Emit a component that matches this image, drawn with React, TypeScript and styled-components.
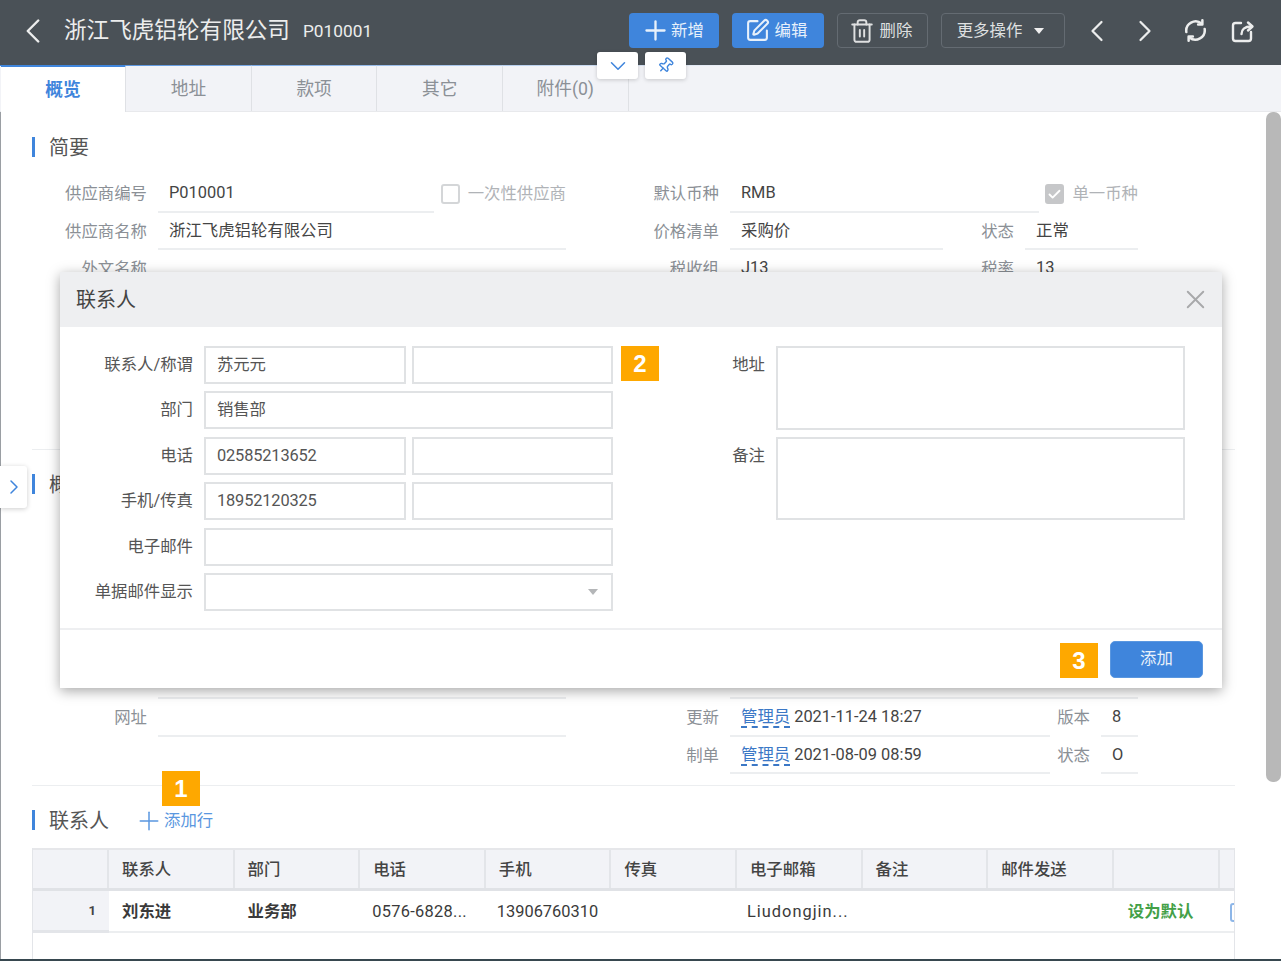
import React from 'react';
import styled, { createGlobalStyle } from 'styled-components';
import { ChevronLeft, ChevronRight, ChevronDown, Plus, SquarePen, Trash2, Pin, X, Check } from 'lucide-react';

const blue = '#3f85dc';
const labelGray = '#8b9096';
const lineGray = '#eceef0';
const fieldBorder = '#e0e2e4';
const fonts = 'Roboto, "Noto Sans CJK SC", sans-serif';

const GlobalStyle = createGlobalStyle`
  html, body {
    margin: 0;
    padding: 0;
    background: #fff;
  }
  body {
    font-family: ${fonts};
    font-size: 16.4px;
    line-height: 20px;
    color: #444;
  }
  * {
    box-sizing: border-box;
  }
  svg {
    flex-shrink: 0;
  }
`;

const Page = styled.div`
  position: relative;
  width: 1281px;
  height: 961px;
  overflow: hidden;
  display: flex;
  flex-direction: column;
  border-bottom: 2px solid #37474f;
`;

const Header = styled.header`
  height: 65px;
  flex-shrink: 0;
  display: flex;
  align-items: center;
  padding: 0 16px 4px 20px;
  background: #4a5157;
  color: #eceded;
`;
const BackButton = styled.div`
  display: flex;
  justify-content: center;
  width: 26px;
  margin-right: 18px;
`;
const Title = styled.h1`
  margin: 0 13px 0 0;
  font-size: 22.6px;
  line-height: 28px;
  font-weight: 400;
`;
const Code = styled.span`
  font-size: 17.3px;
`;
const Actions = styled.div`
  margin-left: auto;
  display: flex;
  align-items: center;
  gap: 13px;
`;
const ActionButton = styled.button<{ $primary?: boolean; $w: number; $gap?: number; $shift?: number }>`
  width: ${p => p.$w}px;
  height: 35px;
  padding: 0 ${p => p.$shift ?? 0}px 0 0;
  display: flex;
  align-items: center;
  justify-content: center;
  gap: ${p => p.$gap ?? 5}px;
  font: 400 16.4px/20px ${fonts};
  color: ${p => (p.$primary ? '#e8f1fb' : '#dfe0e1')};
  background: ${p => (p.$primary ? blue : 'transparent')};
  border: ${p => (p.$primary ? 'none' : '1px solid #646b72')};
  border-radius: 4px;
`;
const Caret = styled.i<{ $color?: string }>`
  width: 0;
  height: 0;
  margin-left: 4px;
  border-left: 5.5px solid transparent;
  border-right: 5.5px solid transparent;
  border-top: 6px solid ${p => p.$color || '#f0f0f0'};
`;
const MoreCaret = styled(Caret)`
  margin-left: 7px;
  margin-right: 5px;
`;
const IconButtons = styled.div`
  display: flex;
  margin-left: 8px;
`;
const IconButton = styled.div<{ $w: number }>`
  width: ${p => p.$w}px;
  display: flex;
  align-items: center;
  justify-content: center;
  color: #eceded;
`;

const FloatBar = styled.div`
  position: absolute;
  left: 597px;
  top: 52px;
  display: flex;
  gap: 7px;
  z-index: 3;
`;
const FloatButton = styled.div`
  width: 41px;
  height: 27px;
  display: flex;
  align-items: center;
  justify-content: center;
  background: #fff;
  color: ${blue};
  border-radius: 3px;
  box-shadow: 0 1px 4px rgba(0, 0, 0, 0.18);
`;
const PinIcon = styled(Pin)`
  transform: rotate(42deg);
`;

const Tabs = styled.nav`
  position: relative;
  height: 47px;
  flex-shrink: 0;
  display: flex;
  padding-left: 0.6px;
  background: #f2f3f7;
  border-bottom: 1px solid #e8e9ec;
  &::before {
    content: '';
    position: absolute;
    top: 0;
    left: 0;
    width: 760px;
    height: 1px;
    background: linear-gradient(90deg, ${blue}, rgba(63, 133, 220, 0));
  }
`;
const Tab = styled.div<{ $active?: boolean }>`
  position: relative;
  width: 125.6px;
  display: flex;
  align-items: center;
  justify-content: center;
  font-size: 17.7px;
  font-weight: ${p => (p.$active ? 700 : 400)};
  color: ${p => (p.$active ? blue : labelGray)};
  background: ${p => (p.$active ? '#fff' : 'transparent')};
  border-right: 1px solid #dfe1e5;
  border-top: 2px solid ${p => (p.$active ? blue : 'transparent')};
  margin-bottom: ${p => (p.$active ? '-1px' : '0')};
`;

const Main = styled.main`
  flex: 1;
  min-height: 0;
  display: flex;
  border-left: 1px solid #9a9ea3;
`;
const Content = styled.div`
  flex: 1;
  min-width: 0;
  padding: 1px 31px 0 31px;
  overflow: hidden;
`;
const Scrollbar = styled.div`
  width: 15px;
  flex-shrink: 0;
  background: #fff;
`;
const Thumb = styled.div`
  height: 670px;
  background: #b8b8b8;
  border-radius: 7px;
`;

const SideHandle = styled.div`
  position: absolute;
  left: 0;
  top: 466px;
  width: 27px;
  height: 42px;
  display: flex;
  align-items: center;
  justify-content: center;
  background: #fff;
  color: ${blue};
  border-radius: 0 3px 3px 0;
  box-shadow: 0 1px 5px rgba(0, 0, 0, 0.2);
  z-index: 1;
`;

const Section = styled.section<{ $last?: boolean }>`
  padding: 24px 0 ${p => (p.$last ? 0 : 11)}px;
  border-bottom: ${p => (p.$last ? 'none' : `1px solid ${lineGray}`)};
`;
const SectionHead = styled.div`
  height: 20px;
  margin-bottom: 18px;
  display: flex;
  align-items: center;
`;
const SectionTitle = styled.h2`
  margin: 0;
  height: 20px;
  padding-left: 14px;
  font-size: 20px;
  font-weight: 400;
  line-height: 22px;
  color: #555;
  border-left: 3px solid ${blue};
`;
const AddRow = styled.div`
  position: relative;
  margin-left: 25px;
  padding-top: 2px;
  display: flex;
  align-items: center;
  gap: 0;
  color: #5a97e0;
`;

const Badge = styled.div`
  width: 38px;
  height: 35px;
  display: flex;
  align-items: center;
  justify-content: center;
  flex-shrink: 0;
  background: #fea800;
  color: #fff;
  font: 700 24px/35px 'Liberation Sans', sans-serif;
`;
const AddBadge = styled(Badge)`
  position: absolute;
  left: 28px;
  top: -33px;
`;
const FormBadge = styled(Badge)`
  position: absolute;
  left: 561px;
  top: 0;
`;
const FooterBadge = styled(Badge)`
  margin-top: 3px;
`;

const Row = styled.div`
  height: 37.5px;
  display: grid;
  grid-template-columns: 534px 538px;
  column-gap: 34px;
`;
const Block = styled.div`
  display: flex;
  min-width: 0;
`;
const Label = styled.div<{ $w: number }>`
  width: ${p => p.$w}px;
  flex-shrink: 0;
  margin-right: 11px;
  padding-top: 9px;
  text-align: right;
  color: ${labelGray};
  white-space: nowrap;
`;
const Value = styled.div<{ $w?: number }>`
  ${p => (p.$w ? `width: ${p.$w}px; flex-shrink: 0;` : 'flex: 1;')}
  min-width: 0;
  padding: 8px 0 0 11px;
  color: #444;
  white-space: nowrap;
  border-bottom: 2px solid ${lineGray};
`;
const HiddenRows = styled.div<{ $rows: number }>`
  height: ${p => p.$rows * 37.5}px;
`;
const CheckField = styled.div<{ $w: number }>`
  width: ${p => p.$w}px;
  flex-shrink: 0;
  margin-left: auto;
  display: flex;
  align-items: flex-start;
  gap: 8px;
  padding-top: 9px;
  color: #b0b3b7;
  white-space: nowrap;
`;
const CheckBox = styled.span<{ $checked?: boolean }>`
  width: 20px;
  height: 20px;
  display: flex;
  align-items: center;
  justify-content: center;
  color: #fff;
  background: ${p => (p.$checked ? '#c6c7c9' : '#fff')};
  border: 2px solid ${p => (p.$checked ? '#c6c7c9' : '#d4d6d8')};
  border-radius: 3px;
`;
const UserLink = styled.span`
  color: #3b78c6;
  border-bottom: 2px dashed #3b78c6;
  margin-right: 4px;
`;

const Table = styled.div`
  height: 112px;
  border-left: 1px solid #e3e5e9;
  border-right: 1px solid #e3e5e9;
  overflow: hidden;
`;
const TableRow = styled.div<{ $head?: boolean }>`
  display: grid;
  grid-template-columns: 76px repeat(8, 125.6px) 106px 1fr;
  height: ${p => (p.$head ? 43 : 42)}px;
  ${p =>
    p.$head
      ? `background: #f2f3f7; border-top: 2px solid #e6e7ea; border-bottom: 3px solid #e0e2e6;`
      : `border-bottom: 2px solid ${lineGray};`}
`;
const HeadCell = styled.div`
  display: flex;
  align-items: center;
  padding: 2px 0 0 13px;
  font-weight: 500;
  color: #444;
  border-right: 2px solid #e3e5e9;
  &:last-child {
    border-right: none;
  }
`;
const Cell = styled.div<{ $pad?: number; $strong?: boolean; $spacing?: number }>`
  display: flex;
  align-items: center;
  padding-left: ${p => p.$pad ?? 11}px;
  font-weight: ${p => (p.$strong ? 700 : 400)};
  letter-spacing: ${p => p.$spacing ?? 0}px;
  color: #3a3a3a;
  white-space: nowrap;
  overflow: hidden;
`;
const IndexCell = styled.div`
  display: flex;
  align-items: center;
  justify-content: flex-end;
  padding-right: 13px;
  height: 42px;
  font-size: 13px;
  font-weight: 700;
  background: #f2f3f7;
  border-bottom: 3px solid #e3e5e9;
`;
const DefaultAction = styled(Cell)`
  padding-left: 14px;
  color: #43a047;
  font-weight: 700;
`;
const RowButton = styled.div`
  margin: 0 0 0 10px;
  width: 30px;
  height: 19px;
  flex-shrink: 0;
  border: 2px solid #8db6e8;
  border-radius: 3px;
`;

const Modal = styled.div`
  position: absolute;
  left: 60px;
  top: 272px;
  width: 1162px;
  height: 416px;
  display: flex;
  flex-direction: column;
  background: #fff;
  box-shadow: 0 3px 12px rgba(0, 0, 0, 0.35);
  z-index: 2;
`;
const ModalHead = styled.div`
  height: 55px;
  flex-shrink: 0;
  display: flex;
  align-items: center;
  justify-content: space-between;
  padding: 0 11px 0 16px;
  background: #eeeff1;
  font-size: 20px;
  color: #444;
`;
const CloseButton = styled.div`
  display: flex;
  color: #a8a9ab;
`;
const ModalBody = styled.div`
  flex: 1;
  display: grid;
  grid-template-columns: 553px 572px;
  padding-top: 19px;
`;
const FormColumn = styled.div`
  position: relative;
  display: flex;
  flex-direction: column;
  gap: 7.4px;
`;
const FormRow = styled.div`
  position: relative;
  display: flex;
  gap: 6px;
`;
const FormLabel = styled.div<{ $w: number }>`
  width: ${p => p.$w}px;
  flex-shrink: 0;
  margin-right: 5px;
  padding-top: 9px;
  text-align: right;
  color: #555;
  white-space: nowrap;
`;
const Input = styled.div`
  flex: 1;
  min-width: 0;
  height: 38px;
  display: flex;
  align-items: center;
  justify-content: space-between;
  padding: 0 13px 0 11px;
  color: #555;
  letter-spacing: -0.15px;
  border: 2px solid ${fieldBorder};
`;
const TextArea = styled.div<{ $h: number }>`
  flex: 1;
  height: ${p => p.$h}px;
  border: 2px solid ${fieldBorder};
`;
const TextRow = styled.div`
  display: flex;
  gap: 6px;
`;
const ModalFooter = styled.div`
  height: 60px;
  flex-shrink: 0;
  display: flex;
  align-items: center;
  justify-content: flex-end;
  gap: 12px;
  padding: 0 19px 0 0;
  border-top: 2px solid #eeeff1;
`;
const AddButton = styled.button`
  width: 93px;
  height: 37px;
  padding: 0;
  font: 400 16.4px/20px ${fonts};
  color: #e8f1fb;
  background: ${blue};
  border: 1px solid #5a97e0;
  border-radius: 5px;
`;

const RefreshIcon = () => (
  <svg width="25" height="25" viewBox="0 0 24 24" fill="none" stroke="currentColor" strokeWidth="2.4" strokeLinecap="round" strokeLinejoin="round">
    <path d="M3.200 13.500A9 9 0 0 1 17.800 5.300" />
    <path d="M18.600 2.200V6.300H14.500" />
    <path d="M20.800 10.500A9 9 0 0 1 6.200 18.700" />
    <path d="M5.400 21.800V17.700H9.500" />
  </svg>
);

const ShareIcon = () => (
  <svg width="24" height="24" viewBox="0 0 24 24" fill="none" stroke="currentColor" strokeWidth="2.4" strokeLinecap="round" strokeLinejoin="round">
    <path d="M10 4H4.500A2.500 2.500 0 0 0 2 6.500V19.500A2.500 2.500 0 0 0 4.500 22H17.500A2.500 2.500 0 0 0 20 19.500V13" />
    <path d="M10.500 15C10.500 10.500 13.500 7.500 20 7.500" />
    <path d="M17 3.500L21.500 7.500L17 11.500" />
  </svg>
);

const columns = ['联系人', '部门', '电话', '手机', '传真', '电子邮箱', '备注', '邮件发送', ''];

export default function App() {
  return (
    <Page>
      <GlobalStyle />
      <Header>
        <BackButton>
          <ChevronLeft size={42} strokeWidth={1.4} />
        </BackButton>
        <Title>浙江飞虎铝轮有限公司</Title>
        <Code>P010001</Code>
        <Actions>
          <ActionButton $primary $w={90} $gap={0} $shift={4}>
            <Plus size={31} strokeWidth={1.8} />
            新增
          </ActionButton>
          <ActionButton $primary $w={92} $shift={4}>
            <SquarePen size={25} strokeWidth={2} />
            编辑
          </ActionButton>
          <ActionButton $w={91} $shift={4}>
            <Trash2 size={26} strokeWidth={1.8} />
            删除
          </ActionButton>
          <ActionButton $w={124}>
            更多操作
            <MoreCaret />
          </ActionButton>
        </Actions>
        <IconButtons>
          <IconButton $w={48}>
            <ChevronLeft size={36} strokeWidth={1.5} />
          </IconButton>
          <IconButton $w={48}>
            <ChevronRight size={36} strokeWidth={1.5} />
          </IconButton>
          <IconButton $w={52}>
            <RefreshIcon />
          </IconButton>
          <IconButton $w={44}>
            <ShareIcon />
          </IconButton>
        </IconButtons>
      </Header>

      <FloatBar>
        <FloatButton>
          <ChevronDown size={26} strokeWidth={1.4} />
        </FloatButton>
        <FloatButton>
          <PinIcon size={17} strokeWidth={2} />
        </FloatButton>
      </FloatBar>

      <Tabs>
        <Tab $active>概览</Tab>
        <Tab>地址</Tab>
        <Tab>款项</Tab>
        <Tab>其它</Tab>
        <Tab>附件(0)</Tab>
      </Tabs>

      <Main>
        <Content>
          <Section>
            <SectionHead>
              <SectionTitle>简要</SectionTitle>
            </SectionHead>
            <Row>
              <Block>
                <Label $w={115}>供应商编号</Label>
                <Value $w={276}>P010001</Value>
                <CheckField $w={125}>
                  <CheckBox />
                  一次性供应商
                </CheckField>
              </Block>
              <Block>
                <Label $w={119}>默认币种</Label>
                <Value $w={309}>RMB</Value>
                <CheckField $w={93}>
                  <CheckBox $checked>
                    <Check size={15} strokeWidth={3} />
                  </CheckBox>
                  单一币种
                </CheckField>
              </Block>
            </Row>
            <Row>
              <Block>
                <Label $w={115}>供应商名称</Label>
                <Value>浙江飞虎铝轮有限公司</Value>
              </Block>
              <Block>
                <Label $w={119}>价格清单</Label>
                <Value $w={213}>采购价</Value>
                <Label $w={71}>状态</Label>
                <Value>正常</Value>
              </Block>
            </Row>
            <Row>
              <Block>
                <Label $w={115}>外文名称</Label>
                <Value />
              </Block>
              <Block>
                <Label $w={119}>税收组</Label>
                <Value $w={213}>J13</Value>
                <Label $w={71}>税率</Label>
                <Value>13</Value>
              </Block>
            </Row>
            <HiddenRows $rows={4} />
          </Section>

          <Section>
            <SectionHead>
              <SectionTitle>概况</SectionTitle>
            </SectionHead>
            <HiddenRows $rows={4} />
            <Row>
              <Block>
                <Label $w={115} />
                <Value />
              </Block>
              <Block>
                <Label $w={119} />
                <Value />
              </Block>
            </Row>
            <Row>
              <Block>
                <Label $w={115}>网址</Label>
                <Value />
              </Block>
              <Block>
                <Label $w={119}>更新</Label>
                <Value $w={320}>
                  <UserLink>管理员</UserLink>2021-11-24 18:27
                </Value>
                <Label $w={40}>版本</Label>
                <Value>8</Value>
              </Block>
            </Row>
            <Row>
              <Block />
              <Block>
                <Label $w={119}>制单</Label>
                <Value $w={320}>
                  <UserLink>管理员</UserLink>2021-08-09 08:59
                </Value>
                <Label $w={40}>状态</Label>
                <Value>O</Value>
              </Block>
            </Row>
          </Section>

          <Section $last>
            <SectionHead>
              <SectionTitle>联系人</SectionTitle>
              <AddRow>
                <Plus size={30} strokeWidth={1.2} />
                添加行
                <AddBadge>1</AddBadge>
              </AddRow>
            </SectionHead>
            <Table>
              <TableRow $head>
                <HeadCell />
                {columns.map((c, i) => (
                  <HeadCell key={i}>{c}</HeadCell>
                ))}
                <HeadCell />
              </TableRow>
              <TableRow>
                <IndexCell>1</IndexCell>
                <Cell $pad={13} $strong>
                  刘东进
                </Cell>
                <Cell $pad={13} $strong>
                  业务部
                </Cell>
                <Cell $pad={12} $spacing={0.3}>
                  0576-6828...
                </Cell>
                <Cell>13906760310</Cell>
                <Cell />
                <Cell $pad={10} $spacing={1}>
                  Liudongjin...
                </Cell>
                <Cell />
                <Cell />
                <DefaultAction>设为默认</DefaultAction>
                <Cell $pad={0}>
                  <RowButton />
                </Cell>
              </TableRow>
            </Table>
          </Section>
        </Content>
        <Scrollbar>
          <Thumb />
        </Scrollbar>
      </Main>

      <SideHandle>
        <ChevronRight size={24} strokeWidth={1.5} />
      </SideHandle>

      <Modal>
        <ModalHead>
          联系人
          <CloseButton>
            <X size={31} strokeWidth={1.5} />
          </CloseButton>
        </ModalHead>
        <ModalBody>
          <FormColumn>
            <FormRow>
              <FormLabel $w={133}>联系人/称谓</FormLabel>
              <Input>苏元元</Input>
              <Input />
              <FormBadge>2</FormBadge>
            </FormRow>
            <FormRow>
              <FormLabel $w={133}>部门</FormLabel>
              <Input>销售部</Input>
            </FormRow>
            <FormRow>
              <FormLabel $w={133}>电话</FormLabel>
              <Input>02585213652</Input>
              <Input />
            </FormRow>
            <FormRow>
              <FormLabel $w={133}>手机/传真</FormLabel>
              <Input>18952120325</Input>
              <Input />
            </FormRow>
            <FormRow>
              <FormLabel $w={133}>电子邮件</FormLabel>
              <Input />
            </FormRow>
            <FormRow>
              <FormLabel $w={133}>单据邮件显示</FormLabel>
              <Input>
                <span />
                <Caret $color="#b4b6b8" />
              </Input>
            </FormRow>
          </FormColumn>
          <FormColumn>
            <TextRow>
              <FormLabel $w={152}>地址</FormLabel>
              <TextArea $h={84} />
            </TextRow>
            <TextRow>
              <FormLabel $w={152}>备注</FormLabel>
              <TextArea $h={83} />
            </TextRow>
          </FormColumn>
        </ModalBody>
        <ModalFooter>
          <FooterBadge>3</FooterBadge>
          <AddButton>添加</AddButton>
        </ModalFooter>
      </Modal>
    </Page>
  );
}
